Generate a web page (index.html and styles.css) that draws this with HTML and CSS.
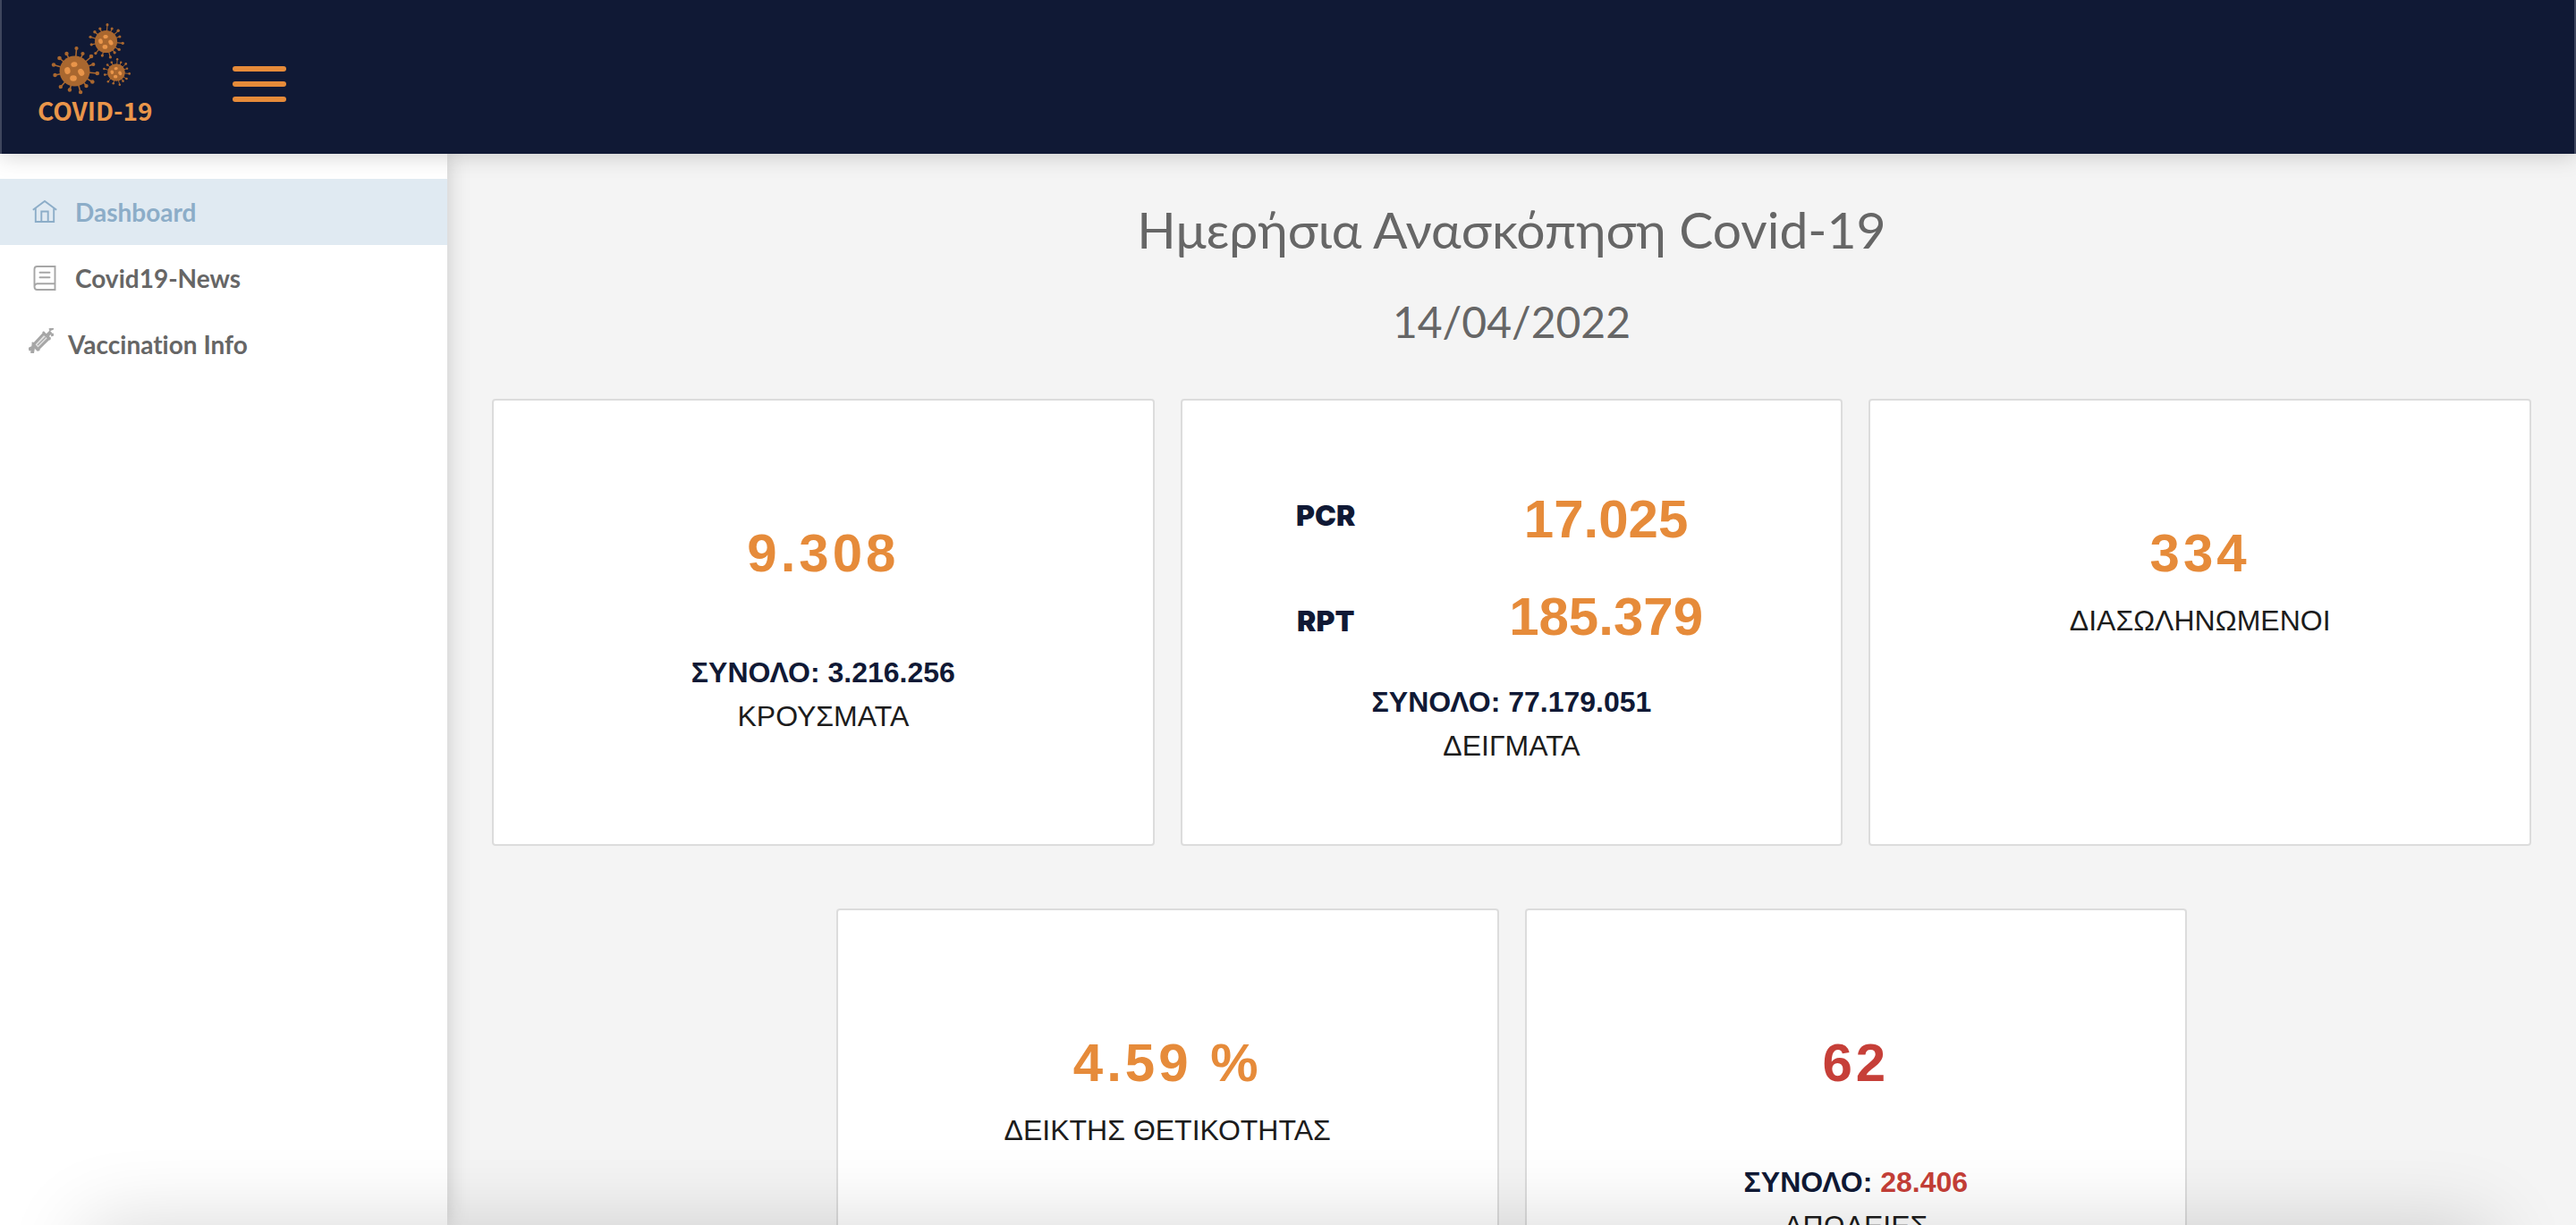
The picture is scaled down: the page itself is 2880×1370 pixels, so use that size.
FILE: index.html
```html
<!DOCTYPE html>
<html lang="el">
<head>
<meta charset="utf-8">
<meta name="viewport" content="width=device-width, initial-scale=1">
<title>Covid-19 Dashboard</title>
<link rel="stylesheet" href="styles.css">
</head>
<body>
<div class="app">
  <header class="topbar">
    <a class="logo" href="#" aria-label="COVID-19">
      <svg class="logo-art" viewBox="0 0 90 80" aria-hidden="true">
        <defs>
          <g id="virus">
            <g stroke="#a9672f" stroke-width="1.6" fill="#a9672f">
              <path d="M0 0L2-25M0 0L9-19M0 0L18.500-16M0 0L20.500-7.500M0 0L25 2.500M0 0L19.500 12M0 0L13 16.500M0 0L6.500 23.500M0 0L-5.500 21M0 0L-15.500 17.500M0 0L-22 4.500M0 0L-23.500-7M0 0L-17-14.500M0 0L-9-19.500" fill="none"/>
              <g stroke="none">
                <circle cx="2" cy="-25.500" r="2.100"/><circle cx="9" cy="-19.500" r="2.100"/><circle cx="18.500" cy="-16.500" r="2.300"/><circle cx="20.800" cy="-7.500" r="2.100"/><circle cx="25.300" cy="2.500" r="2.300"/><circle cx="19.800" cy="12" r="2.300"/><circle cx="13" cy="16.600" r="2.200"/><circle cx="6.600" cy="23.600" r="2.200"/><circle cx="-5.600" cy="21" r="2.200"/><circle cx="-15.700" cy="17.600" r="2.200"/><circle cx="-22" cy="4.500" r="2.200"/><circle cx="-23.500" cy="-7" r="2.200"/><circle cx="-17" cy="-14.500" r="2.300"/><circle cx="-9" cy="-19.500" r="2.200"/>
                <circle r="17"/>
              </g>
            </g>
            <g fill="#e9954a">
              <ellipse cx="-.500" cy="-7.500" rx="3.600" ry="2.800" transform="rotate(-10 0 -7)"/>
              <ellipse cx="-8" cy="-.500" rx="3.200" ry="3.900" transform="rotate(-12 -8 0)"/>
              <ellipse cx="7" cy="1.500" rx="3.200" ry="4.200" transform="rotate(-30 7 1)"/>
              <ellipse cx="-1.500" cy="8" rx="3.800" ry="3.200"/>
            </g>
          </g>
        </defs>
        <use href="#virus" transform="translate(27.500 53.500)"/>
        <use href="#virus" transform="translate(62.500 20.500) scale(.74)"/>
        <use href="#virus" transform="translate(74 55) scale(.58)"/>
      </svg>
      <span class="logo-text">COVID-19</span>
    </a>
    <button class="menu" type="button" aria-label="Menu"><span></span><span></span><span></span></button>
  </header>
  <div class="body">
    <nav class="sidebar">
      <a class="item active" href="#">
        <svg class="icon" viewBox="0 0 28 28" fill="none" stroke="currentColor" stroke-width="1.900"><path d="M.800 11.800L14 2l13.200 9.800M3.800 9.800V25h20.400V9.800M10.300 25V13.500h7.400V25"/></svg>
        <span>Dashboard</span>
      </a>
      <a class="item" href="#">
        <svg class="icon icon-book" viewBox="0 0 28 28" fill="none" stroke="currentColor" stroke-width="1.900" stroke-linecap="round"><path d="M25.500 1H5.500Q2.500 1 2.500 4v19.500Q2.500 27 5.500 27h20zM2.500 23.500q0-3 3-3.300h20M8.500 7.700h11M8.500 13.300h11"/></svg>
        <span>Covid19-News</span>
      </a>
      <a class="item item-wide" href="#">
        <svg class="icon icon-syringe" viewBox="0 0 28 28" fill="none" stroke="currentColor"><path d="M0 24l6-3M4 28l1-6" stroke-width="4"/><path d="M5 19L17 6l6 5-13 13z" stroke-width="3" fill="#e2e2e2"/><path d="M16 4l8 9M4 16l8 9" stroke-width="2.500"/><path d="M21 8l4-4" stroke-width="4"/><path d="M23 2l5-2M25 8l3-1" stroke-width="3"/><path d="M10 19l9-9" stroke-width="1.200"/></svg>
        <span>Vaccination Info</span>
      </a>
    </nav>
    <main class="content">
      <h1 class="title">Ημερήσια Ανασκόπηση Covid-19</h1>
      <p class="date">14/04/2022</p>
      <div class="cards">
        <section class="card">
          <p class="number">9.308</p>
          <p class="total">ΣΥΝΟΛΟ: 3.216.256</p>
          <p class="label">ΚΡΟΥΣΜΑΤΑ</p>
        </section>
        <section class="card card-tests">
          <div class="tests">
            <div class="test-names"><span>PCR</span><span>RPT</span></div>
            <div class="test-values"><span>17.025</span><span>185.379</span></div>
          </div>
          <p class="total">ΣΥΝΟΛΟ: 77.179.051</p>
          <p class="label">ΔΕΙΓΜΑΤΑ</p>
        </section>
        <section class="card">
          <p class="number">334</p>
          <p class="label">ΔΙΑΣΩΛΗΝΩΜΕΝΟΙ</p>
        </section>
        <section class="card">
          <p class="number">4.59 %</p>
          <p class="label">ΔΕΙΚΤΗΣ ΘΕΤΙΚΟΤΗΤΑΣ</p>
        </section>
        <section class="card">
          <p class="number red">62</p>
          <p class="total">ΣΥΝΟΛΟ: <span class="red">28.406</span></p>
          <p class="label">ΑΠΩΛΕΙΕΣ</p>
        </section>
      </div>
    </main>
  </div>
  <div class="fade"></div>
</div>
</body>
</html>
```
FILE: styles.css
```css
* { box-sizing: border-box; }
body {
  margin: 0;
  background: #f4f4f4;
  color: #1c1c1c;
  font-family: "Liberation Sans", Arial, sans-serif;
  font-size: 32px;
}
h1, p { margin: 0; font-weight: 400; }
a { color: inherit; text-decoration: none; }

.app { height: 100vh; display: flex; flex-direction: column; overflow: hidden; }

.topbar {
  position: relative;
  z-index: 2;
  flex: none;
  height: 172px;
  padding: 26px 40px;
  display: flex;
  align-items: flex-start;
  gap: 90px;
  background: #101935;
  border-left: 2px solid #3f465d;
  border-right: 2px solid #3f465d;
  box-shadow: 0 2px 24px rgba(0, 0, 0, .18);
}
.logo { display: flex; flex-direction: column; align-items: flex-start; width: 128px; }
.logo-art { width: 90px; height: 80px; margin-left: 14px; overflow: visible; }
.logo-text {
  color: #e9954a;
  font: 700 28px/34px "Noto Sans CJK SC", "Liberation Sans", sans-serif;
  white-space: nowrap;
}
.menu {
  display: flex;
  flex-direction: column;
  gap: 11px;
  width: 60px;
  margin-top: 48px;
  padding: 0;
  border: 0;
  background: none;
}
.menu span { height: 6px; border-radius: 3px; background: #e68b3a; }

.body { flex: 1; display: flex; min-height: 0; }

.sidebar {
  flex: none;
  width: 500px;
  padding-top: 28px;
  background: #fff;
  box-shadow: 0 0 24px rgba(0, 0, 0, .18);
}
.item {
  display: flex;
  align-items: center;
  gap: 20px;
  height: 74px;
  padding-left: 36px;
  color: #666;
  font: 700 28px/34px Lato, sans-serif;
  font-variant-ligatures: none;
}
.item.active { background: #e0eaf2; color: #8cadc8; }
.item-wide { padding-left: 32px; gap: 16px; }
.icon { flex: none; width: 28px; height: 28px; }
.icon-book, .icon-syringe { color: #a6a6a6; }
.icon-syringe { margin-bottom: 8px; }

.content {
  flex: 1;
  min-width: 0;
  overflow: auto;
  scrollbar-width: none;
  padding: 50px 50px 70px;
  color: #666;
  text-align: center;
}
.title { font: 400 57px/68px Lato, sans-serif; }
.date { margin-top: 40px; font: 400 48px/60px Lato, sans-serif; }

.cards {
  display: flex;
  flex-wrap: wrap;
  justify-content: center;
  gap: 70px 29px;
  margin-top: 56px;
  color: #1c1c1c;
}
.card {
  width: calc((100% - 58px) / 3);
  min-height: 500px;
  padding-top: 136px;
  background: #fff;
  border: 2px solid #dcdcdc;
  border-radius: 4px;
  line-height: 49px;
}
.number {
  color: #e68b3a;
  font-size: 60px;
  font-weight: 700;
  line-height: 70px;
  letter-spacing: 4px;
}
.number + .total { margin-top: 74px; }
.number + .label { margin-top: 16px; }
.total { color: #101935; font-weight: 700; }
.red { color: #c63f38; }

.card-tests { padding-top: 98px; }
.tests { display: grid; grid-template-columns: 41fr 39fr; padding-right: 110px; margin-bottom: 36px; }
.test-names, .test-values { display: flex; flex-direction: column; font-weight: 700; }
.test-names {
  gap: 69px;
  padding-top: 6px;
  color: #101935;
  font-family: Inter, sans-serif;
  font-weight: 900;
}
.test-values { gap: 39px; color: #e68b3a; font-size: 60px; line-height: 70px; }

/* Soft shade along the bottom edge of the window */
.fade {
  position: fixed;
  z-index: 3;
  right: 96px;
  bottom: -120px;
  left: 96px;
  height: 120px;
  box-shadow: 0 0 90px rgba(0, 0, 0, .16);
  pointer-events: none;
}
```
